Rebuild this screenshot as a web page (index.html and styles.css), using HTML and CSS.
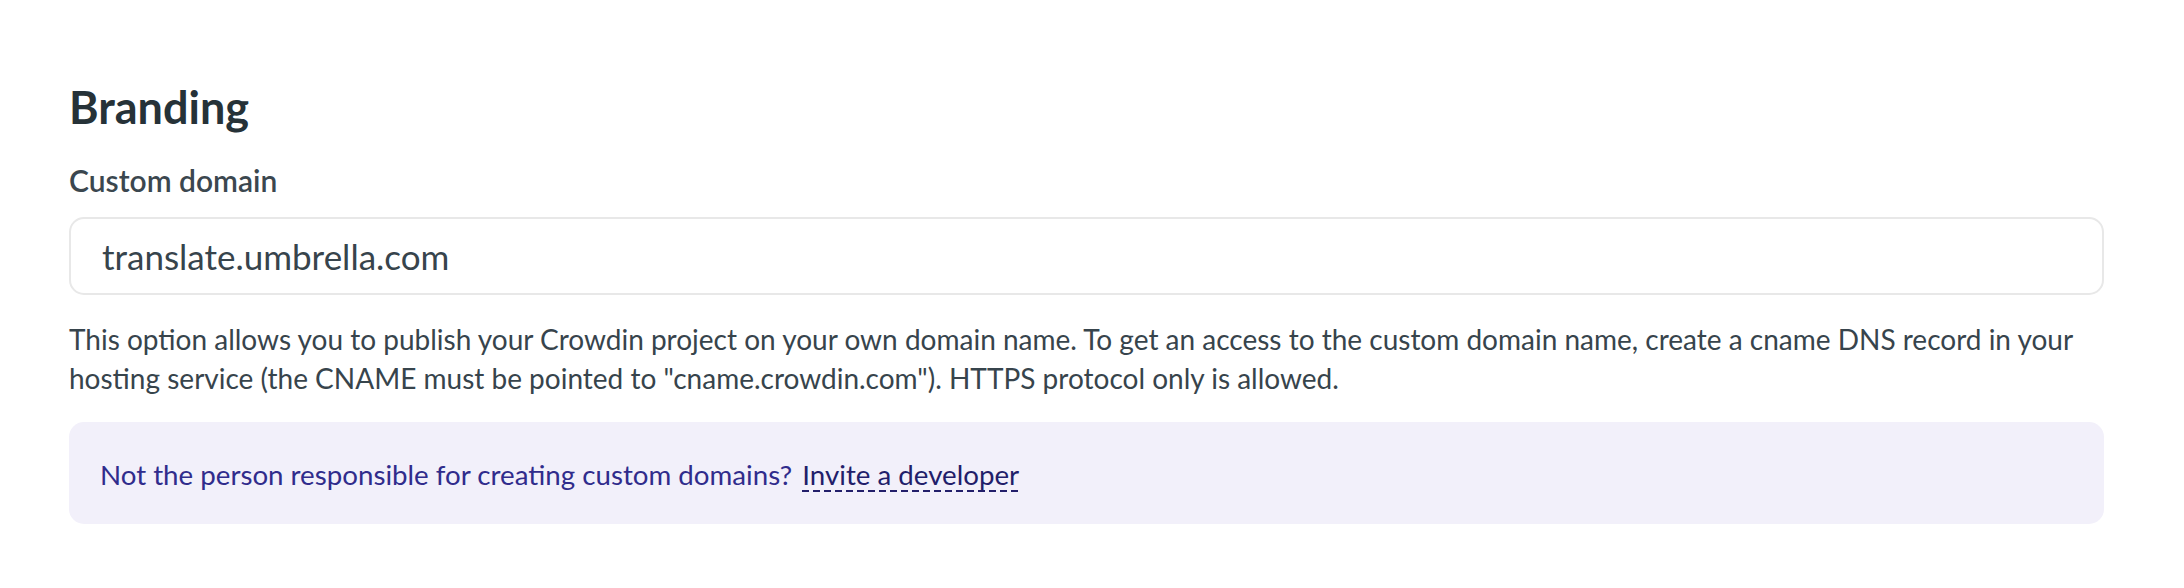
FILE: index.html
```html
<!DOCTYPE html>
<html lang="en">
<head>
<meta charset="utf-8">
<title>Branding</title>
<link rel="stylesheet" href="styles.css">
</head>
<body>
<section class="branding">
  <h2 class="title">Branding</h2>
  <label class="label">Custom domain</label>
  <div class="field">translate.umbrella.com</div>
  <p class="hint">This option allows you to publish your Crowdin project on your own domain name. To get an access to the custom domain name, create a cname DNS record in your hosting service (the CNAME must be pointed to "cname.crowdin.com"). HTTPS protocol only is allowed.</p>
  <div class="notice">
    <span class="notice-text">Not the person responsible for creating custom domains?</span>
    <a class="notice-link" href="#">Invite a developer</a>
  </div>
</section>
</body>
</html>
```

FILE: styles.css
```css
html, body {
  margin: 0;
  padding: 0;
  background: #ffffff;
}

body {
  font-family: Lato, "Noto Sans", sans-serif;
}

.branding {
  width: 2035px;
  padding: 79px 0 0 69px;
  display: flex;
  flex-direction: column;
}

.title {
  margin: 0;
  font-size: 45px;
  line-height: 56px;
  font-weight: 700;
  color: #263238;
}

.label {
  margin-top: 27px;
  font-size: 30px;
  line-height: 36px;
  font-weight: 600;
  color: #3b474f;
}

.field {
  margin-top: 19px;
  box-sizing: border-box;
  height: 78px;
  border: 2px solid #e8e8e8;
  border-radius: 15px;
  padding: 19px 0 0 31px;
  font-size: 35px;
  line-height: 36px;
  color: #37444c;
}

.hint {
  margin: 25px 0 0 0;
  font-size: 28px;
  line-height: 39px;
  color: #37444c;
}

.notice {
  margin-top: 24px;
  box-sizing: border-box;
  height: 102px;
  background: #f2f0fa;
  border-radius: 15px;
  padding: 33px 0 0 31px;
  font-size: 27.7px;
  line-height: 39px;
  color: #302c8c;
}

.notice-link {
  margin-left: 3px;
  color: #221e6a;
  text-decoration: none;
  padding-bottom: 1px;
  background-image: linear-gradient(to right, #221e6a 62%, transparent 62%);
  background-size: 11px 2px;
  background-repeat: repeat-x;
  background-position: left bottom;
}
```
